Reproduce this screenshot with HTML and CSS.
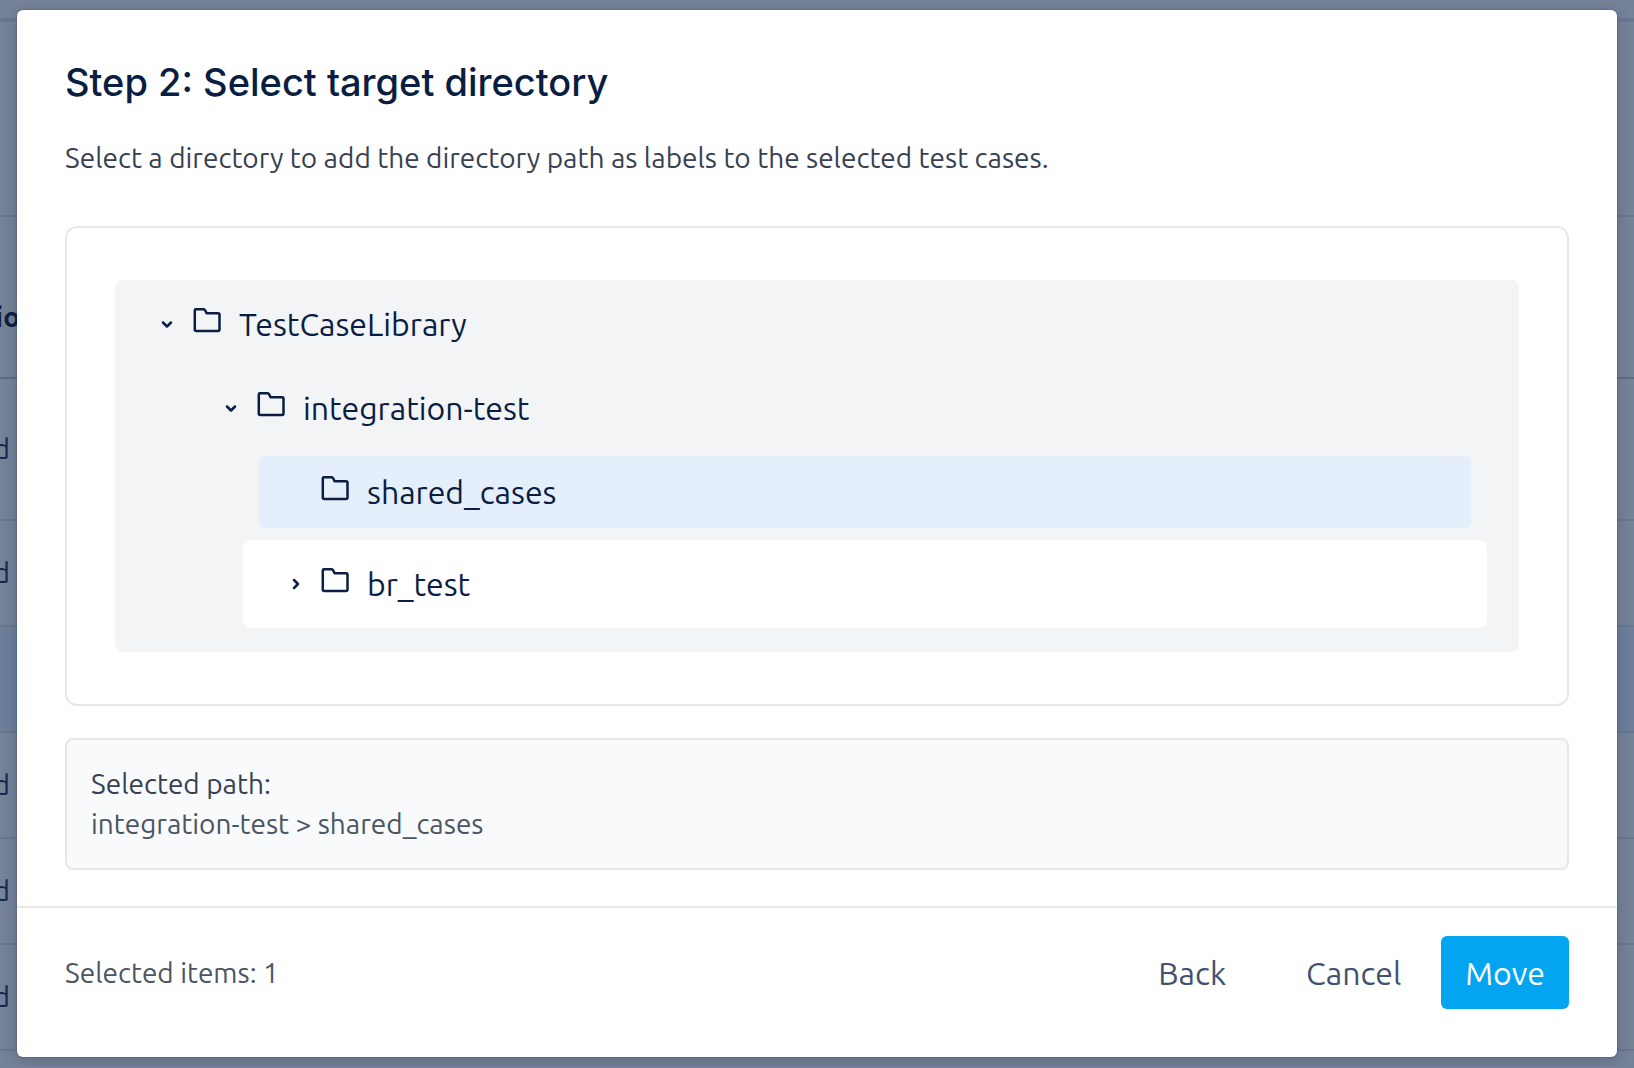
FILE: index.html
```html
<!DOCTYPE html>
<html lang="en">
<head>
    <meta charset="UTF-8">
    <meta name="viewport" content="width=device-width, initial-scale=1.0">
    <title>Select target directory</title>
    <link rel="stylesheet" href="styles.css">
</head>
<body>
    <!-- Test case list behind the dialog -->
    <div class="page" aria-hidden="true">
        <div class="page-bar"></div>
        <div class="page-toolbar"></div>
        <div class="page-head"><span>io</span></div>
        <div class="page-row page-row-tall"><span>d</span></div>
        <div class="page-row"><span>d</span></div>
        <div class="page-row selected"></div>
        <div class="page-row"><span>d</span></div>
        <div class="page-row"><span>d</span></div>
        <div class="page-row"><span>d</span></div>
    </div>

    <div class="overlay">
        <section class="modal" role="dialog" aria-labelledby="modalTitle">
            <div class="modal-body">
                <h1 id="modalTitle">Step 2: Select target directory</h1>
                <p class="description">Select a directory to add the directory path as labels to the selected test cases.</p>

                <div class="tree-box">
                    <ul class="tree">
                        <li class="node node-root">
                            <div class="node-row">
                                <button type="button" class="toggle" aria-label="Collapse TestCaseLibrary" aria-expanded="true">
                                    <svg width="12" height="12" viewBox="0 0 12 12"><path d="M2 4.500L6 8.500L10 4.500"/></svg>
                                </button>
                                <svg class="folder" width="32" height="32" viewBox="0 0 32 32"><path d="M5 5.300H12.700Q13.500 5.300 14 6.200L15.700 9.300H27Q28.500 9.300 28.500 10.800V25.500Q28.500 27 27 27H5.300Q3.800 27 3.800 25.500V6.500Q3.800 5.300 5 5.300Z"/></svg>
                                <span class="node-name">TestCaseLibrary</span>
                            </div>
                            <ul>
                                <li class="node">
                                    <div class="node-row">
                                        <button type="button" class="toggle" aria-label="Collapse integration-test" aria-expanded="true">
                                            <svg width="12" height="12" viewBox="0 0 12 12"><path d="M2 4.500L6 8.500L10 4.500"/></svg>
                                        </button>
                                        <svg class="folder" width="32" height="32" viewBox="0 0 32 32"><path d="M5 5.300H12.700Q13.500 5.300 14 6.200L15.700 9.300H27Q28.500 9.300 28.500 10.800V25.500Q28.500 27 27 27H5.300Q3.800 27 3.800 25.500V6.500Q3.800 5.300 5 5.300Z"/></svg>
                                        <span class="node-name">integration-test</span>
                                    </div>
                                    <ul>
                                        <li class="node">
                                            <div class="node-row selected">
                                                <span class="toggle"></span>
                                                <svg class="folder" width="32" height="32" viewBox="0 0 32 32"><path d="M5 5.300H12.700Q13.500 5.300 14 6.200L15.700 9.300H27Q28.500 9.300 28.500 10.800V25.500Q28.500 27 27 27H5.300Q3.800 27 3.800 25.500V6.500Q3.800 5.300 5 5.300Z"/></svg>
                                                <span class="node-name">shared_cases</span>
                                            </div>
                                        </li>
                                        <li class="node node-closed">
                                            <div class="node-row">
                                                <button type="button" class="toggle" aria-label="Expand br_test" aria-expanded="false">
                                                    <svg width="12" height="12" viewBox="0 0 12 12"><path d="M5 2L9 6L5 10"/></svg>
                                                </button>
                                                <svg class="folder" width="32" height="32" viewBox="0 0 32 32"><path d="M5 5.300H12.700Q13.500 5.300 14 6.200L15.700 9.300H27Q28.500 9.300 28.500 10.800V25.500Q28.500 27 27 27H5.300Q3.800 27 3.800 25.500V6.500Q3.800 5.300 5 5.300Z"/></svg>
                                                <span class="node-name">br_test</span>
                                            </div>
                                        </li>
                                    </ul>
                                </li>
                            </ul>
                        </li>
                    </ul>
                </div>

                <div class="path-box">
                    <div class="path-label">Selected path:</div>
                    <div class="path-value">integration-test &gt; shared_cases</div>
                </div>
            </div>

            <footer class="modal-footer">
                <span class="count">Selected items: 1</span>
                <div class="actions">
                    <button type="button" class="btn btn-back">Back</button>
                    <button type="button" class="btn">Cancel</button>
                    <button type="button" class="btn btn-primary">Move</button>
                </div>
            </footer>
        </section>
    </div>
</body>
</html>
```
FILE: styles.css
```css
* {
    box-sizing: border-box;
}

body {
    margin: 0;
    font-family: Ubuntu, "Noto Sans", sans-serif;
    font-size: 28px;
    line-height: 40px;
    color: #091e42;
    background-color: #758297;
}

ul {
    list-style: none;
    margin: 0;
    padding: 0;
}

/* Dimmed page behind the dialog */
.page {
    position: absolute;
    inset: 0;
    overflow: hidden;
    background-color: #758297;
    color: #132a52;
}

.page span {
    display: flex;
    justify-content: flex-end;
    width: 10px;
}

.page-bar {
    height: 22px;
    border-bottom: 4px solid #6b7790;
}

.page-toolbar {
    height: 195px;
    border-bottom: 2px solid #6b768b;
}

.page-head {
    display: flex;
    align-items: flex-end;
    height: 162px;
    padding-bottom: 40px;
    border-bottom: 2px solid #5f6b82;
    font-weight: 700;
    color: #0c1f42;
}

.page .page-head span {
    width: 20px;
}

.page-row {
    display: flex;
    align-items: center;
    height: 106px;
    border-bottom: 2px solid #6b768b;
}

.page-row-tall {
    height: 142px;
}

.page-row.selected {
    background-color: #6e7e9a;
}

/* Dialog */
.overlay {
    position: relative;
    padding: 10px 17px;
}

.modal {
    background-color: #ffffff;
    border-radius: 6px;
    box-shadow: 0 0 2px rgba(9, 30, 66, 0.4), 0 4px 16px rgba(9, 30, 66, 0.2);
}

.modal-body {
    padding: 48px 48px 36px;
}

h1 {
    margin: 0 0 32px;
    font-family: Inter, sans-serif;
    font-size: 38px;
    font-weight: 500;
    line-height: 48px;
}

.description {
    margin: 0 0 48px;
    color: #374151;
}

/* Directory tree */
.tree-box {
    padding: 52px 48px;
    border: 2px solid #e5e7eb;
    border-radius: 12px;
}

.node {
    margin-top: 4px;
    padding: 8px 16px;
    border-radius: 8px;
}

.node ul {
    padding: 0 0 4px 48px;
}

.node-root {
    margin-top: 0;
    background-color: #f3f4f6;
}

.node-root > ul {
    padding-bottom: 4px;
}

.node-closed {
    background-color: #ffffff;
}

.node-row {
    display: flex;
    align-items: center;
    height: 72px;
    padding: 0 16px;
    border-radius: 6px;
    font-size: 32px;
}

.node-row.selected {
    background-color: #e5effb;
}

.toggle {
    display: flex;
    align-items: center;
    justify-content: center;
    width: 40px;
    height: 40px;
    padding: 0;
    border: none;
    background: none;
    color: inherit;
}

.toggle svg,
.folder {
    fill: none;
    stroke: currentColor;
    stroke-width: 2.5;
    stroke-linecap: round;
    stroke-linejoin: round;
}

.folder {
    margin: 0 16px 8px 4px;
}

/* Selected path */
.path-box {
    margin-top: 32px;
    padding: 24px;
    border: 2px solid #e5e7eb;
    border-radius: 8px;
    background-color: #f9fafc;
}

.path-label {
    color: #374151;
}

.path-value {
    color: #4b5563;
}

/* Footer */
.modal-footer {
    display: flex;
    align-items: center;
    justify-content: space-between;
    padding: 28px 48px 48px;
    border-top: 2px solid #e5e7eb;
}

.count {
    color: #4b5563;
}

.actions {
    display: flex;
    gap: 16px;
}

.btn {
    height: 73px;
    padding: 0 24px;
    border: none;
    border-radius: 6px;
    background: none;
    font-family: inherit;
    font-size: 32px;
    color: #42526e;
}

.btn-back {
    margin-right: 16px;
}

.btn-primary {
    background-color: #03a5f0;
    color: #ffffff;
}
```
